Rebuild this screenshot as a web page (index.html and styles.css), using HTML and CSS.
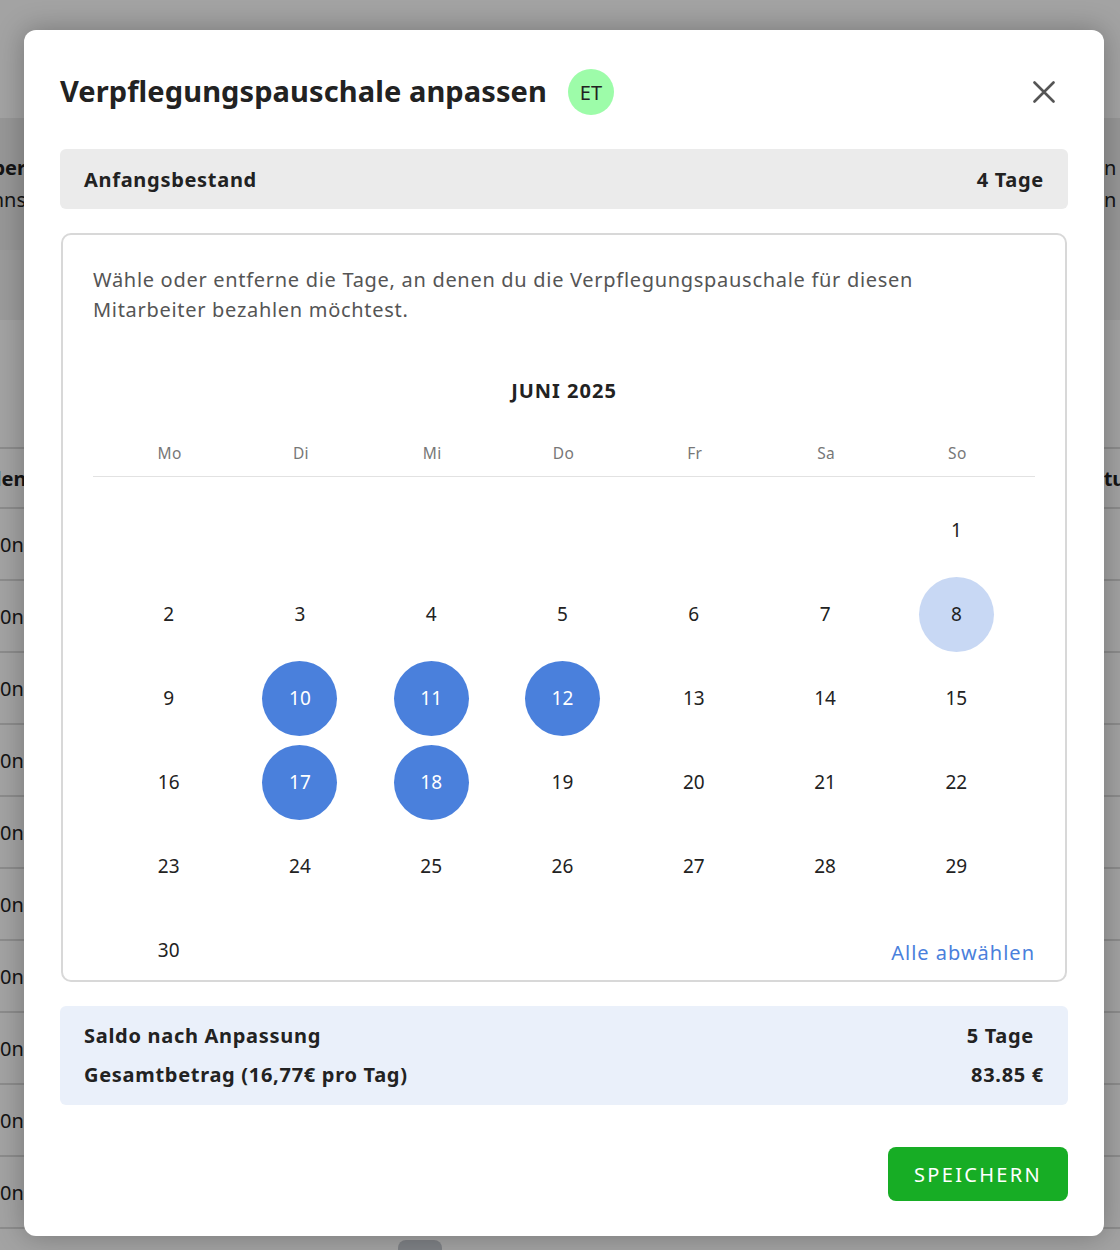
FILE: index.html
```html
<!DOCTYPE html>
<html lang="de">
<head>
<meta charset="utf-8">
<title>Verpflegungspauschale anpassen</title>
<link rel="stylesheet" href="styles.css">
</head>
<body>
<div class="page">
  <div class="topbar"></div>
  <div class="hero">
    <div class="hero-left"><div class="strong">Übersicht über</div><div>Zeitrechnns</div></div>
    <div class="hero-right"><div>n Übersicht</div><div>n von allen</div></div>
  </div>
  <div class="band"></div>
  <div class="spacer"></div>
  <div class="table">
    <div class="trow thead"><span class="tl">Stellen</span><span class="tr th">Status</span></div>
    <div class="trow"><span class="tr">0n</span></div>
    <div class="trow"><span class="tr">0n</span></div>
    <div class="trow"><span class="tr">0n</span></div>
    <div class="trow"><span class="tr">0n</span></div>
    <div class="trow"><span class="tr">0n</span></div>
    <div class="trow"><span class="tr">0n</span></div>
    <div class="trow"><span class="tr">0n</span></div>
    <div class="trow"><span class="tr">0n</span></div>
    <div class="trow"><span class="tr">0n</span></div>
    <div class="trow"><span class="tr">0n</span></div>
  </div>
  <div class="pager"></div>

  <div class="overlay"></div>

  <div class="modal">
    <div class="modal-head">
      <h1 class="title">Verpflegungspauschale anpassen</h1>
      <span class="badge">ET</span>
      <button class="close" aria-label="Schließen">
        <svg width="22" height="22" viewBox="0 0 22 22"><path d="M1.5 1.5 L20.5 20.5 M20.5 1.5 L1.5 20.5" stroke="#555" stroke-width="2.6" stroke-linecap="round" fill="none"/></svg>
      </button>
    </div>

    <div class="stat-bar">
      <span>Anfangsbestand</span>
      <span>4 Tage</span>
    </div>

    <div class="cal-card">
      <p class="hint">Wähle oder entferne die Tage, an denen du die Verpflegungspauschale für diesen Mitarbeiter bezahlen möchtest.</p>
      <div class="month">JUNI 2025</div>
      <div class="weekdays">
        <span>Mo</span><span>Di</span><span>Mi</span><span>Do</span><span>Fr</span><span>Sa</span><span>So</span>
      </div>
      <div class="days">
        <span class="day empty"></span><span class="day empty"></span><span class="day empty"></span><span class="day empty"></span><span class="day empty"></span><span class="day empty"></span>
        <span class="day"><span class="num">1</span></span>
        <span class="day"><span class="num">2</span></span>
        <span class="day"><span class="num">3</span></span>
        <span class="day"><span class="num">4</span></span>
        <span class="day"><span class="num">5</span></span>
        <span class="day"><span class="num">6</span></span>
        <span class="day"><span class="num">7</span></span>
        <span class="day"><span class="num light">8</span></span>
        <span class="day"><span class="num">9</span></span>
        <span class="day"><span class="num sel">10</span></span>
        <span class="day"><span class="num sel">11</span></span>
        <span class="day"><span class="num sel">12</span></span>
        <span class="day"><span class="num">13</span></span>
        <span class="day"><span class="num">14</span></span>
        <span class="day"><span class="num">15</span></span>
        <span class="day"><span class="num">16</span></span>
        <span class="day"><span class="num sel">17</span></span>
        <span class="day"><span class="num sel">18</span></span>
        <span class="day"><span class="num">19</span></span>
        <span class="day"><span class="num">20</span></span>
        <span class="day"><span class="num">21</span></span>
        <span class="day"><span class="num">22</span></span>
        <span class="day"><span class="num">23</span></span>
        <span class="day"><span class="num">24</span></span>
        <span class="day"><span class="num">25</span></span>
        <span class="day"><span class="num">26</span></span>
        <span class="day"><span class="num">27</span></span>
        <span class="day"><span class="num">28</span></span>
        <span class="day"><span class="num">29</span></span>
        <span class="day"><span class="num">30</span></span>
        <a class="deselect" href="#">Alle abwählen</a>
      </div>
    </div>

    <div class="summary">
      <div class="sum-row"><span>Saldo nach Anpassung</span><span class="pad">5 Tage</span></div>
      <div class="sum-row"><span>Gesamtbetrag (16,77€ pro Tag)</span><span>83.85 €</span></div>
    </div>

    <div class="actions">
      <button class="save">SPEICHERN</button>
    </div>
  </div>
</div>
</body>
</html>
```

FILE: styles.css
```css
* { box-sizing: border-box; }
html, body { margin: 0; padding: 0; }
body {
  font-family: "Noto Sans", "Open Sans", sans-serif;
  color: #222;
  background: #fff;
}
.page {
  position: relative;
  width: 1120px;
  height: 1250px;
  overflow: hidden;
  background: #fff;
}
.topbar { height: 118px; background: #fff; }
.hero {
  height: 132px;
  background: #ececec;
  display: flex;
  align-items: center;
  font-size: 20px;
  line-height: 32px;
}
.hero-left {
  flex: 0 0 26px;
  overflow: hidden;
  white-space: nowrap;
  direction: rtl;
  text-align: right;
}
.hero-right {
  flex: 0 0 auto;
  margin-left: 1078px;
  white-space: nowrap;
}
.strong { font-weight: 700; }
.band { height: 70px; background: #f3f3f3; }
.spacer { height: 127px; }
.table { border-top: 2px solid #dcdcdc; }
.trow {
  height: 72px;
  border-bottom: 2px solid #dcdcdc;
  display: flex;
  justify-content: space-between;
  align-items: center;
  font-size: 20px;
  white-space: nowrap;
}
.thead { height: 60px; font-weight: 700; }
.tl { margin-left: -42px; }
.tr { flex: 0 0 60px; margin-right: -44px; }
.tr.th { flex: 0 0 80px; margin-right: -32px; }
.pager {
  position: absolute;
  left: 398px;
  top: 1240px;
  width: 44px;
  height: 30px;
  border-radius: 8px;
  background: #c6cad0;
}
.overlay {
  position: absolute;
  inset: 0;
  background: rgba(0, 0, 0, 0.36);
}

/* Modal */
.modal {
  position: absolute;
  left: 24px;
  top: 30px;
  width: 1080px;
  height: 1206px;
  background: #fff;
  border-radius: 12px;
  box-shadow: 0 0 28px rgba(0, 0, 0, 0.28);
  padding: 38px 36px 35px;
  display: flex;
  flex-direction: column;
}
.modal-head {
  display: flex;
  align-items: center;
  height: 46px;
}
.title {
  margin: 0 0 1px;
  font-size: 29px;
  font-weight: 700;
  color: #222;
  letter-spacing: 0.1px;
}
.badge {
  margin-left: 21px;
  margin-top: 2px;
  width: 46px;
  height: 46px;
  border-radius: 50%;
  background: #9dfca9;
  display: flex;
  align-items: center;
  justify-content: center;
  font-size: 20px;
  color: #222;
}
.close {
  margin-left: auto;
  margin-right: 13px;
  margin-top: 2px;
  border: 0;
  background: none;
  padding: 0;
  width: 22px;
  height: 22px;
  display: flex;
}

.stat-bar {
  margin-top: 35px;
  height: 60px;
  flex: 0 0 60px;
  background: #ebebeb;
  border-radius: 6px;
  padding: 0 24px;
  display: flex;
  align-items: center;
  justify-content: space-between;
  font-size: 20px;
  font-weight: 700;
  letter-spacing: 0.7px;
  color: #222;
}

.cal-card {
  margin: 24px 1px 0;
  border: 2.5px solid #d8d8d8;
  border-radius: 10px;
  padding: 30px 30px 0;
}
.hint {
  margin: 0;
  font-size: 20px;
  line-height: 30px;
  letter-spacing: 0.7px;
  color: #555;
  max-width: 860px;
}
.month {
  margin-top: 54px;
  text-align: center;
  font-size: 20px;
  font-weight: 700;
  line-height: 24px;
  letter-spacing: 1px;
  color: #222;
}
.weekdays {
  margin-top: 40px;
  display: grid;
  grid-template-columns: repeat(7, 1fr);
  padding: 0 12px 13px 11px;
  border-bottom: 1.5px solid #e2e2e2;
  font-size: 15.5px;
  line-height: 20px;
  letter-spacing: 0.3px;
  color: #777;
  text-align: center;
}
.days {
  margin-top: 11px;
  margin-bottom: -12px;
  display: grid;
  grid-template-columns: repeat(7, 1fr);
  grid-auto-rows: 84px;
  padding: 0 13px 0 10px;
}
.day {
  display: flex;
  align-items: center;
  justify-content: center;
}
.num {
  width: 75px;
  height: 75px;
  border-radius: 50%;
  display: flex;
  align-items: center;
  justify-content: center;
  font-size: 19px;
  color: #222;
}
.num.sel { background: #4a80dc; color: #fff; }
.num.light { background: #c8d8f4; }
.deselect {
  grid-column: 5 / 8;
  justify-self: end;
  align-self: center;
  margin-right: -13px;
  margin-top: 4px;
  font-size: 20px;
  color: #4a80dc;
  text-decoration: none;
  letter-spacing: 1px;
}

.summary {
  margin-top: 24px;
  background: #eaf0fa;
  border-radius: 6px;
  padding: 18px 24px;
  display: flex;
  flex-direction: column;
  gap: 15px;
  font-size: 20px;
  font-weight: 700;
  line-height: 24px;
  letter-spacing: 0.7px;
  color: #222;
}
.sum-row { display: flex; justify-content: space-between; }
.pad { padding-right: 10px; }

.actions {
  margin-top: 42px;
  display: flex;
  justify-content: flex-end;
}
.save {
  width: 180px;
  height: 54px;
  border: 0;
  border-radius: 8px;
  background: #17ad25;
  color: #fff;
  font-family: "Noto Sans", "Open Sans", sans-serif;
  font-size: 20px;
  letter-spacing: 2.3px;
  padding: 0;
}
```
